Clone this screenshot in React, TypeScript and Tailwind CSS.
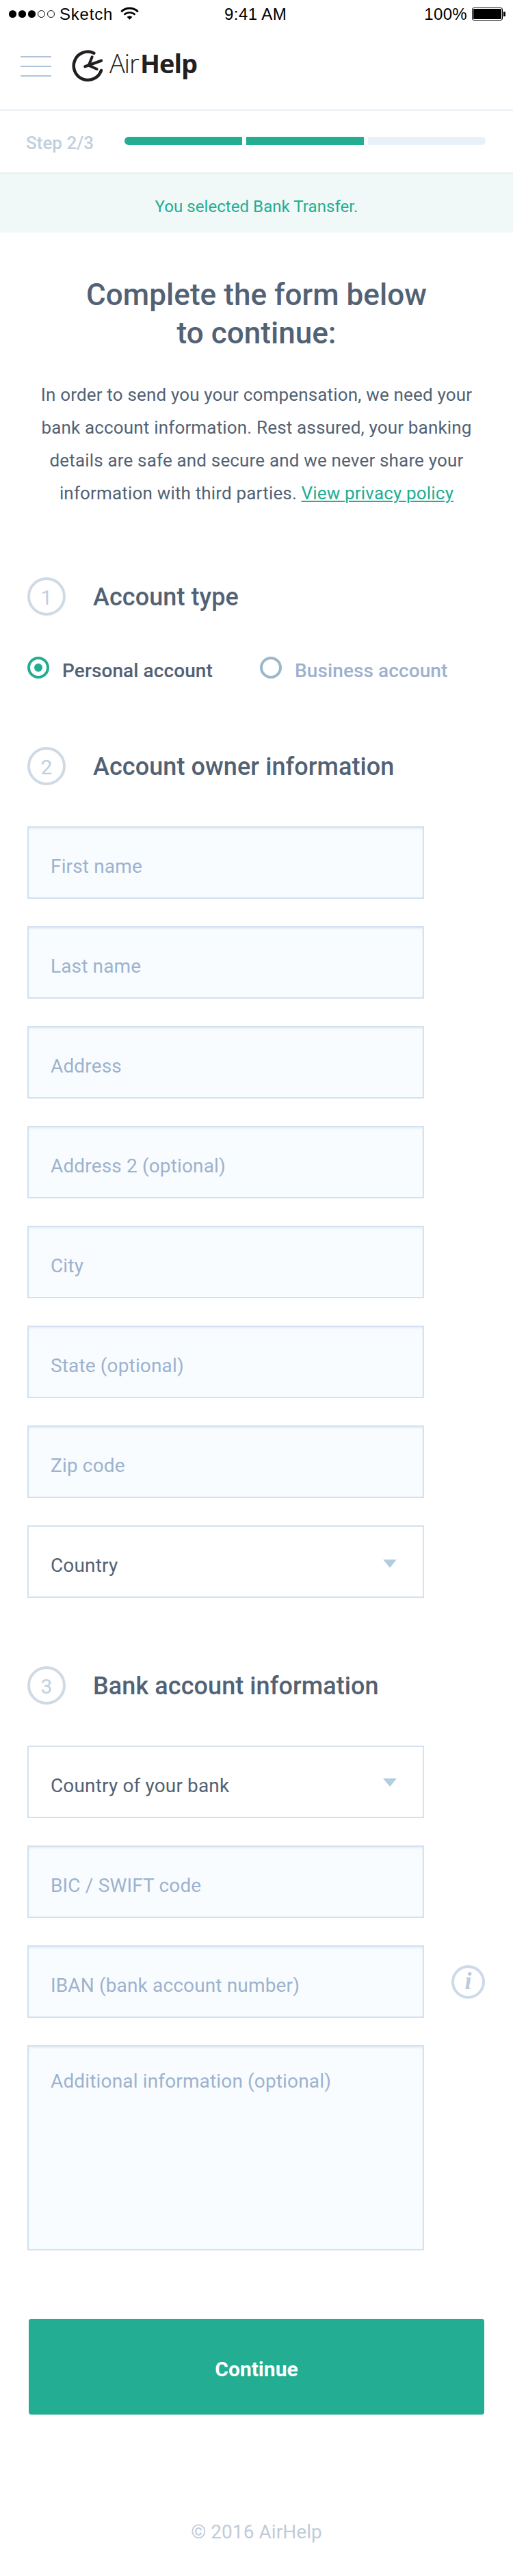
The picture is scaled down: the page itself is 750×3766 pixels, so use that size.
import type { ReactNode } from "react";

function StatusBar() {
  return (
    <div className="flex h-10 items-start font-['Liberation_Sans',sans-serif] text-[24px] leading-[41px] text-black">
      <div className="flex w-[328px] items-start pl-[12px]">
        <svg className="mt-[14px] h-[13px] w-[70px]" viewBox="0 0 70 13">
          <circle cx="6.5" cy="6.5" r="5.6" />
          <circle cx="20.5" cy="6.5" r="5.6" />
          <circle cx="34.5" cy="6.5" r="5.6" />
          <circle cx="48.5" cy="6.5" r="5" fill="none" stroke="#000" />
          <circle cx="62.5" cy="6.5" r="5" fill="none" stroke="#000" />
        </svg>
        <span className="ml-[5px] tracking-[0.8px]">Sketch</span>
        <svg className="ml-[11px] mt-[10px] h-5 w-[27px]" viewBox="0 0 27 20" fill="none" stroke="#000">
          <path d="M1.3 7.2a17.2 17.2 0 0 1 24.4 0" strokeWidth="3" />
          <path d="M5.5 11.6a11.3 11.3 0 0 1 16 0" strokeWidth="2.6" />
          <path d="M13.5 18.8l-4-4a5.7 5.7 0 0 1 8 0z" fill="#000" stroke="none" />
        </svg>
      </div>
      <span className="tracking-[0.44px]">9:41 AM</span>
      <div className="ml-auto flex items-start pr-[10px]">
        <span className="tracking-[0.32px]">100%</span>
        <svg className="ml-[7px] mt-[11px] h-[19px] w-[50px]" viewBox="0 0 50 19">
          <rect x="0.5" y="0.5" width="44" height="18" rx="2.5" fill="none" stroke="#000" />
          <rect x="2" y="2" width="41" height="15" rx="1" />
          <path d="M46 6h1.5a1.5 1.5 0 0 1 1.5 1.500v4a1.500 1.500 0 0 1-1.500 1.500H46z" />
        </svg>
      </div>
    </div>
  );
}

function Header() {
  return (
    <header className="flex h-[122px] items-start border-b-2 border-[#eaf0f5] pl-[30px]">
      <div className="mt-[42px] flex w-[45px] flex-col gap-3">
        <span className="h-[2px] bg-[#b1c3d8]" />
        <span className="h-[2px] bg-[#b1c3d8]" />
        <span className="h-[2px] bg-[#b1c3d8]" />
      </div>
      <svg
        className="ml-[30px] mt-8 h-12 w-[46px]"
        viewBox="27 30 138 144"
        fill="none"
        stroke="#231f20"
        strokeLinecap="round"
        strokeLinejoin="round"
      >
        <path d="M124 47A62 62 0 1 0 156 123" strokeWidth="13.500" />
        <path d="M85 106L156 80" strokeWidth="13" />
        <path d="M116 64L101 101L137 117" strokeWidth="12" />
      </svg>
      <div className="ml-[9px] mt-[24px] flex font-['Open_Sans',sans-serif] text-[38px] leading-[57px] text-[#231f20]">
        <span className="w-[45px] font-light tracking-[-1.2px]">Air</span>
        <span className="font-bold tracking-[-1px]">Help</span>
      </div>
    </header>
  );
}

function Progress() {
  return (
    <div className="flex h-[92px] items-start border-b-2 border-[#eaf0f5] pl-[38px]">
      <span className="mt-[29px] w-[144px] text-[26px] leading-9 font-medium text-[#c0cfde]">Step 2/3</span>
      <div className="mt-[38px] flex gap-[6px]">
        <span className="h-3 w-[172px] rounded-l-full bg-[#23ad92]" />
        <span className="h-3 w-[172px] bg-[#23ad92]" />
        <span className="h-3 w-[172px] rounded-r-full bg-[#e9f1f8]" />
      </div>
    </div>
  );
}

function SectionTitle({ n, children }: { n: number; children: ReactNode }) {
  return (
    <div className="flex h-14 gap-10">
      <div className="flex size-14 justify-center rounded-full border-4 border-[#d0dae4] text-[30px] leading-[51px] text-[#c0cfde]">
        {n}
      </div>
      <h2 className="text-[36px] leading-[59px] font-medium tracking-[0.08px] text-[#526274]">{children}</h2>
    </div>
  );
}

function Field({ label }: { label: string }) {
  return (
    <div className="h-[106px] w-[580px] border-2 border-[#d3e1f1] bg-[#f8fcff] pt-[42px] pl-8 text-[28px] leading-[29px] tracking-[0.15px] text-[#9db2ce] shadow-[inset_0_2px_3px_#e6edf6]">
      {label}
    </div>
  );
}

function Select({ label, arrow }: { label: string; arrow: string }) {
  return (
    <div className="flex h-[106px] w-[580px] items-start justify-between border-2 border-[#d3e1f1] bg-white pt-[42px] pr-[38px] pl-8 text-[28px] leading-[29px] tracking-[0.15px] text-[#526274]">
      {label}
      <svg className={arrow} viewBox="0 0 20 12">
        <path d="M0 0h20L10 12z" fill="#b0cee0" />
      </svg>
    </div>
  );
}

export default function App() {
  return (
    <div className="h-[3766px] w-[750px] overflow-hidden bg-white font-['Roboto',sans-serif]">
      <StatusBar />
      <Header />
      <Progress />
      <div className="h-[86px] bg-[#f1f9f8] pt-7 text-center text-[24px] leading-10 tracking-[0.06px] text-[#23ad92]">
        You selected Bank Transfer.
      </div>

      <h1 className="pt-[63px] text-center text-[44px] leading-[56px] font-medium tracking-[0.05px] text-[#526274]">
        Complete the form below
        <br />
        to continue:
      </h1>
      <p className="mt-[38px] text-center text-[26px] leading-[48px] tracking-[0.17px] text-[#526274]">
        In order to send you your compensation, we need your
        <br />
        bank account information. Rest assured, your banking
        <br />
        details are safe and secure and we never share your
        <br />
        information with third parties.{" "}
        <a className="text-[#23ad92] underline decoration-2 underline-offset-2">View privacy policy</a>
      </p>

      <main className="pt-[99px] pl-10">
        <SectionTitle n={1}>Account type</SectionTitle>
        <div className="mt-[60px] flex h-8 text-[28px] leading-[33px] font-medium tracking-[0.1px]">
          <div className="flex w-[340px] gap-[19px] text-[#526274]">
            <span className="flex size-8 items-center justify-center rounded-full border-4 border-[#23ad92]">
              <span className="size-3 rounded-full bg-[#23ad92]" />
            </span>
            <span className="pt-1">Personal account</span>
          </div>
          <div className="flex gap-[19px] text-[#9db2ce]">
            <span className="size-8 rounded-full border-4 border-[#9bb7cb]" />
            <span className="pt-1">Business account</span>
          </div>
        </div>

        <div className="mt-[100px]">
          <SectionTitle n={2}>Account owner information</SectionTitle>
        </div>
        <div className="mt-[60px] flex flex-col gap-10">
          <Field label="First name" />
          <Field label="Last name" />
          <Field label="Address" />
          <Field label="Address 2 (optional)" />
          <Field label="City" />
          <Field label="State (optional)" />
          <Field label="Zip code" />
          <Select label="Country" arrow="mt-[6px] h-3 w-5" />
        </div>

        <div className="mt-[100px]">
          <SectionTitle n={3}>Bank account information</SectionTitle>
        </div>
        <div className="mt-[60px] flex flex-col gap-10">
          <Select label="Country of your bank" arrow="mt-1 h-3 w-5" />
          <Field label="BIC / SWIFT code" />
          <div className="flex gap-10">
            <Field label="IBAN (bank account number)" />
            <div className="mt-[29px] flex size-[49px] justify-center rounded-full border-4 border-[#cddaea] font-['Liberation_Serif',serif] text-[36px] leading-[38px] font-bold text-[#bccbdc] italic">
              i
            </div>
          </div>
          <div className="h-[300px] w-[580px] border-2 border-[#d3e1f1] bg-[#f8fcff] pt-9 pl-8 text-[28px] leading-[29px] tracking-[0.15px] text-[#9db2ce] shadow-[inset_0_2px_3px_#e6edf6]">
            Additional information (optional)
          </div>
        </div>
      </main>

      <button className="mt-[100px] ml-[42px] flex h-[140px] w-[666px] justify-center rounded bg-[#23ad92] pt-[54px] text-[30px] leading-10 font-bold text-white">
        Continue
      </button>
      <footer className="mt-[156px] text-center text-[28px] leading-8 tracking-[0.07px] text-[#c1cbd9]">
        © 2016 AirHelp
      </footer>
    </div>
  );
}
